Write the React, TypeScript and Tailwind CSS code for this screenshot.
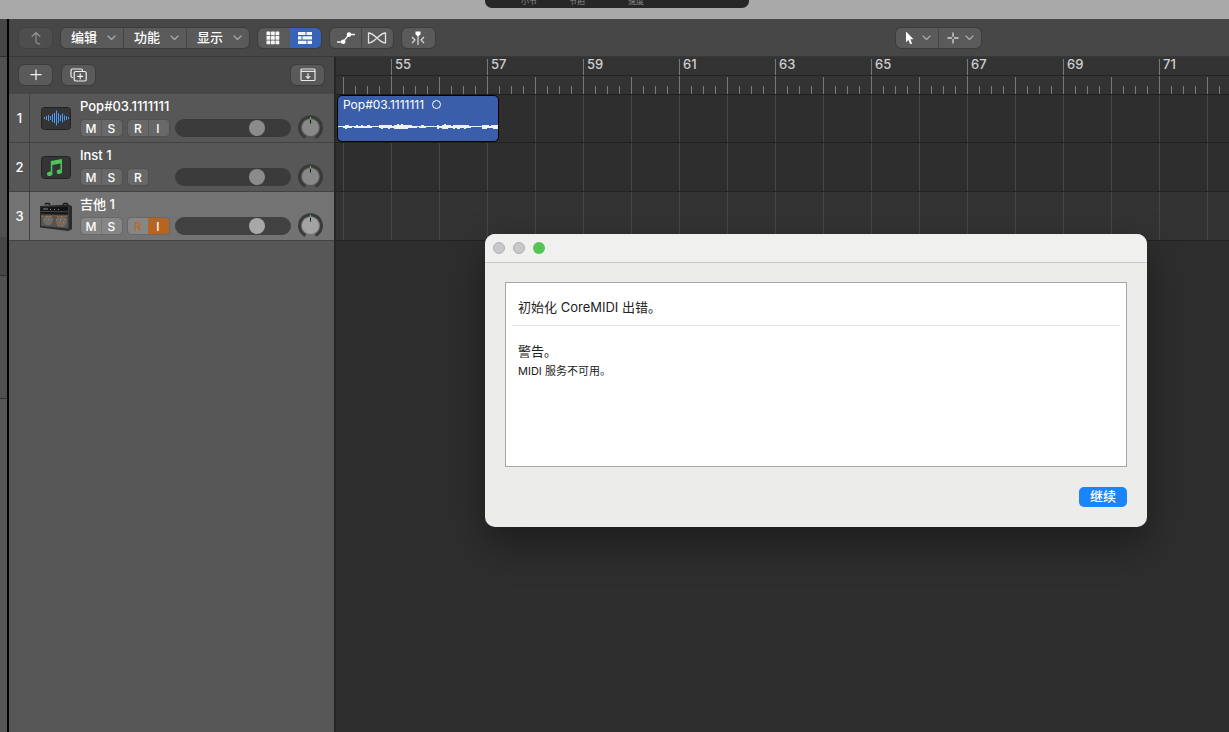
import type { ReactNode } from 'react';

const BARS = Array.from({ length: 19 }, (_, i) => 54 + i);

const WAVE = [0, 0, 2, 4, 3, 2, 1, 2, 3, 2, 3, 2, 2, 3, 2, 1, 1, 1, 3, 4, 3, 3, 4, 3, 2, 4, 5, 4, 5, 4, 4, 3, 3, 2, 2, 1, 2, 3, 2, 1, 1, 1, 1, 1, 4, 2, 4, 5, 4, 3, 2, 4, 3, 4, 3, 3, 4, 3, 2, 1, 1, 1, 1, 1, 4, 4, 3, 2, 3, 4, 4];

const FONT = "font-['Inter','Noto_Sans_CJK_SC',sans-serif]";
const GROUP = 'flex h-5 overflow-hidden rounded-[5px] bg-[#5a5a5a] outline outline-[#3c3c3c]';

const Chevron = () => (
  <svg width="9" height="6" viewBox="0 0 9 6" fill="none" stroke="#a5a5a8" strokeWidth="1.4" strokeLinecap="round" strokeLinejoin="round">
    <path d="M1 1 4.500 4.500 8 1" />
  </svg>
);

interface ToolButtonProps {
  label: string;
  className?: string;
  children: ReactNode;
}

const ToolButton = ({ label, className = 'w-[33px]', children }: ToolButtonProps) => (
  <button aria-label={label} className={`flex h-5 items-center justify-center ${className}`}>
    {children}
  </button>
);

const MenuButton = ({ label }: { label: string }) => (
  <button className="flex h-5 w-[63px] items-center justify-between border-l border-[#454545] pr-[7px] pl-[10px] text-[13px] leading-[18px] font-medium text-white first:w-[62px] first:border-l-0">
    <span className="pb-0.5">{label}</span>
    <Chevron />
  </button>
);

const Toolbar = () => (
  <div className="flex h-[38px] shrink-0 items-start border-b border-[#383838] bg-[#474747] pt-[9px] pl-[10px]">
    <div className="flex h-5 overflow-hidden rounded-[5px] bg-[#4e4e4e] outline outline-[#414141]">
      <ToolButton label="返回">
        <svg width="14" height="14" viewBox="0 0 14 14" fill="none" stroke="#8f8f8f" strokeWidth="1.2" strokeLinecap="round" strokeLinejoin="round">
          <path d="M3 5.500 7 1.500 11 5.500M7 1.700V10Q7 12.800 10.800 12.800" />
        </svg>
      </ToolButton>
    </div>
    <div className={`ml-[9px] ${GROUP}`}>
      <MenuButton label="编辑" />
      <MenuButton label="功能" />
      <MenuButton label="显示" />
    </div>
    <div className={`ml-[9px] ${GROUP}`}>
      <ToolButton label="网格" className="w-8 pr-0.5">
        <svg width="14" height="14" viewBox="0 0 14 14" fill="#f5f5f5">
          {[0.5, 5, 9.5].map((y) => [0.5, 5, 9.5].map((x) => <rect key={`${x}-${y}`} x={x} y={y} width="3.800" height="3.800" rx="0.400" />))}
        </svg>
      </ToolButton>
      <ToolButton label="轨道" className="w-[31px] bg-[#3764b9] pr-px">
        <svg width="16" height="14" viewBox="0 0 16 14" fill="#f5f5f5">
          <path d="M1 1h7.500v3H1zM9.500 1H15v3H9.500zM1 5.200h3.500v3.300H1zM5.500 5.200H15v3.300H5.500zM1 9.700h8.500v3.300H1zM10.500 9.700H15v3.300h-4.500z" />
        </svg>
      </ToolButton>
    </div>
    <div className={`ml-[9px] ${GROUP}`}>
      <ToolButton label="自动化" className="w-[31px]">
        <svg width="20" height="14" viewBox="0 0 20 14" stroke="#f0f0f0" strokeWidth="1.3" fill="none">
          <path d="M1 11h6L13 3.500h6" />
          <circle cx="7.200" cy="10.800" r="2.300" fill="#fff" stroke="none" />
          <circle cx="13" cy="3.600" r="2.300" fill="#fff" stroke="none" />
        </svg>
      </ToolButton>
      <ToolButton label="弹性" className="w-8 border-l border-[#454545] pr-0.5">
        <svg width="20" height="14" viewBox="0 0 20 14" fill="none" stroke="#e4e4e4" strokeWidth="1.300" strokeLinejoin="round">
          <path d="M1.500 2v10C8 12 12 2 18.500 2v10C12 12 8 2 1.500 2Z" />
        </svg>
      </ToolButton>
    </div>
    <div className={`ml-[9px] ${GROUP}`}>
      <ToolButton label="吸附" className="w-[33px] pr-px">
        <svg width="14" height="14" viewBox="0 0 14 14" fill="none" stroke="#dcdcdc" strokeWidth="1.200">
          <path d="M7 3v11M1 6l3 3-3 3M13 6l-3 3 3 3" />
          <path d="M4.500 0.500h5v3L7 5.500 4.500 3.500z" fill="#fff" stroke="none" />
        </svg>
      </ToolButton>
    </div>
    <div className={`mr-[248px] ml-auto ${GROUP}`}>
      <ToolButton label="指针工具" className="w-[42px] gap-2 pl-px">
        <svg width="9" height="14" viewBox="0 0 9 14" fill="#fff">
          <path d="M1 0.500v10.700l2.400-2.200 1.800 4.200 1.900-.8-1.800-4.100h3.200z" />
        </svg>
        <Chevron />
      </ToolButton>
      <ToolButton label="十字工具" className="w-[43px] gap-1.5 border-l border-[#454545]">
        <svg width="12" height="12" viewBox="0 0 12 12" stroke="#d5d5d5" strokeWidth="1.300">
          <path d="M6 0.500v4.500M6 7v4.500M0.500 6H5M7 6h4.500" />
        </svg>
        <Chevron />
      </ToolButton>
    </div>
  </div>
);

const TrackHeaderBar = () => (
  <div className="flex h-[37px] items-start bg-[#474747] pt-2 pr-[10px] pl-[10px]">
    <div className={GROUP}>
      <ToolButton label="新建轨道">
        <svg width="13" height="12" viewBox="0 0 13 12" stroke="#f0f0f0" strokeWidth="1.300" strokeLinecap="round">
          <path d="M7 1v9.500M2 5.700h10" />
        </svg>
      </ToolButton>
    </div>
    <div className={`ml-[10px] ${GROUP}`}>
      <ToolButton label="复制轨道">
        <svg width="17" height="14" viewBox="0 0 17 14" fill="none" stroke="#f0f0f0" strokeWidth="1.200" strokeLinecap="round">
          <path d="M2.500 9.500Q1 9.500 1 8V2.500Q1 1 2.500 1h8.500Q12.500 1 12.500 2.500" />
          <rect x="4.200" y="3.500" width="12" height="9.500" rx="1.500" />
          <path d="M10.200 5.800v5M7.700 8.300h5" />
        </svg>
      </ToolButton>
    </div>
    <div className={`ml-auto ${GROUP}`}>
      <ToolButton label="全局轨道">
        <svg width="16" height="14" viewBox="0 0 16 14" fill="none" stroke="#e6e6e6" strokeWidth="1.200">
          <rect x="1" y="1" width="14" height="11.500" rx="1" />
          <path d="M1 3.300h14" />
          <path d="M8 5.200v5M5.800 8.200 8 10.400 10.200 8.200" />
        </svg>
      </ToolButton>
    </div>
  </div>
);

const WaveIcon = () => (
  <svg width="32" height="24" viewBox="0 0 32 24">
    <rect x="1.500" y="0.500" width="29" height="22" rx="3" fill="#333436" stroke="#232323" />
    <path
      d="M4.500 10v2M6.500 9v4M8.500 8v6M10.500 9v4M12.500 7v8M14.500 6v10M16.500 3.500v15M18.500 6v10M20.500 8v6M22.500 6.500v9M24.500 8.500v5M26.500 9v4M28.500 10v2"
      stroke="#4c9af5"
      strokeWidth="1"
    />
  </svg>
);

const NoteIcon = () => (
  <svg width="32" height="24" viewBox="0 0 32 24">
    <rect x="1.500" y="0.500" width="29" height="22" rx="3" fill="#333436" stroke="#232323" />
    <g fill="#4fc45b">
      <path d="M10.800 5 22 3V15.500H20.500V7.500L12.300 9V18H10.800Z" />
      <ellipse cx="9.700" cy="17.800" rx="2.700" ry="2.200" transform="rotate(-15 9.700 17.800)" />
      <ellipse cx="19.400" cy="15.700" rx="2.700" ry="2.200" transform="rotate(-15 19.400 15.700)" />
    </g>
  </svg>
);

const AmpIcon = () => (
  <svg width="34" height="30" viewBox="0 0 34 30">
    <path d="M6 2.500 7 1.500H10L11 3M24 3 25 1.500H28L29 3" fill="none" stroke="#1b1b1b" strokeWidth="1.500" />
    <path d="M1 4 30 2.500 33 4.500V27L29.500 29 1 25.500Z" fill="#2a2a2b" />
    <path d="M2 5.500 29 4.500V12L2 11.500Z" fill="#151516" />
    <path d="M4 7h5M11 7.500h1M15 7.500h1M19 7.500h1" stroke="#9a9a9a" strokeWidth="0.900" />
    <path d="M2 9.500 29 9.800" stroke="#4b4b4b" />
    <path d="M2 12.500 29 13V26.500L2 24Z" fill="#565452" />
    <circle cx="9" cy="18.500" r="4.800" fill="#6d6b69" />
    <circle cx="22.500" cy="19.500" r="5.500" fill="#6b6967" />
    <g fill="none" stroke="#d0752a" strokeWidth="1.200" strokeDasharray="1.200 2.800">
      <path d="M3 14.300h11M5 17.500h9M18 14.500h9M17 17.500h11M20 20.500h7M19 23.500h7" />
    </g>
    <path d="M29.500 4.500V28.500" stroke="#3b3b3b" />
  </svg>
);

const ICONS: Record<string, ReactNode> = {
  audio: <WaveIcon />,
  inst: <NoteIcon />,
  amp: <AmpIcon />,
};

const Knob = ({ selected }: { selected: boolean }) => (
  <svg width="26" height="26" viewBox="0 0 26 26">
    <path d="M7.500 22.500A11 11 0 1 1 17.500 22.500" fill="none" stroke="#3a3a3a" strokeWidth="3" />
    <circle cx="12.500" cy="12.500" r="8.600" fill={selected ? '#a3a3a3' : '#888888'} />
    <path d="M12 4.500h1v4h-1z" fill="#111" />
    <path d="M12 2h1v2.500h-1z" fill="#3fd04a" />
  </svg>
);

interface Track {
  id: number;
  name: string;
  icon: string;
  input: boolean;
  selected: boolean;
}

const TRACKS: Track[] = [
  { id: 1, name: 'Pop#03.1111111', icon: 'audio', input: true, selected: false },
  { id: 2, name: 'Inst 1', icon: 'inst', input: false, selected: false },
  { id: 3, name: '吉他 1', icon: 'amp', input: true, selected: true },
];

const TrackRow = ({ track }: { track: Track }) => {
  const { selected } = track;
  const chip = selected ? 'bg-[#868686] outline-[#686868]' : 'bg-[#686868] outline-[#505050]';
  const split = selected ? 'border-[#747474]' : 'border-[#5a5a5a]';

  return (
    <div className={`flex h-[49px] border-b border-[#424242] ${selected ? 'bg-[#737373]' : 'bg-[#575757]'}`}>
      <div className="flex w-[21px] items-center justify-center border-r border-[#424242] pt-0.5 pl-px text-[13px] font-medium text-white">
        {track.id}
      </div>
      <div className="flex w-[50px] items-center justify-center pt-0.5 pl-px">{ICONS[track.icon]}</div>
      <div className="flex-1">
        <div className="h-[25px] truncate text-[13px] leading-[25px] font-medium text-white">{track.name}</div>
        <div className="flex h-[18px] items-center">
          <div className={`ml-px flex h-4 overflow-hidden rounded-[3px] text-xs leading-[17px] font-medium text-white outline ${chip}`}>
            <button className="w-5">M</button>
            <button className={`w-[21px] border-l pr-px ${split}`}>S</button>
          </div>
          <div className={`ml-1.5 flex h-4 overflow-hidden rounded-[3px] text-xs leading-[17px] font-medium text-white outline ${chip}`}>
            <button className={selected ? 'w-5 text-[#bd6a2a]' : 'w-5'}>R</button>
            {track.input && (
              <button className={`w-[21px] border-l pr-0.5 ${selected ? 'border-[#b76420] bg-[#b76420]' : split}`}>I</button>
            )}
          </div>
          <input
            type="range"
            aria-label={`${track.name} 音量`}
            defaultValue={74}
            className={`mr-[7px] ml-auto h-[18px] w-[116px] appearance-none rounded-full px-px [&::-webkit-slider-thumb]:size-4 [&::-webkit-slider-thumb]:appearance-none [&::-webkit-slider-thumb]:rounded-full ${
              selected
                ? 'bg-[#414141] [&::-webkit-slider-thumb]:bg-[#a8a8a8]'
                : 'bg-[#3b3b3b] [&::-webkit-slider-thumb]:bg-[#8b8b8b]'
            }`}
          />
          <div className="mr-[10px]">
            <Knob selected={selected} />
          </div>
        </div>
      </div>
    </div>
  );
};

const Ruler = () => (
  <div className="flex h-[38px] overflow-hidden border-b border-[#1e1e1e] bg-[#333333]">
    <div className="mt-[18px] w-[7px] shrink-0 border-t border-[#222222]" />
    {BARS.map((bar) => (
      <div key={bar} className="w-12 shrink-0">
        <div className={`mt-0.5 h-4 ${bar % 2 ? 'border-l border-[#7a7a7a] pl-[3px] text-[13px] leading-[11px] font-medium text-[#d0d0d0]' : ''}`}>
          {bar % 2 ? bar : ''}
        </div>
        <div className="flex h-[19px] items-end border-t border-[#222222]">
          <div className={`w-3 border-l border-[#7a7a7a] ${bar % 2 ? 'h-[18px]' : 'h-[17px]'}`} />
          <div className="h-2 w-3 border-l border-[#7a7a7a]" />
          <div className="h-2 w-3 border-l border-[#7a7a7a]" />
          <div className="h-2 w-3 border-l border-[#7a7a7a]" />
        </div>
      </div>
    ))}
  </div>
);

const Region = () => (
  <div className="ml-px h-[47px] w-[162px] rounded-[5px] border border-black bg-[#3a5ea9] text-white">
    <div className="flex h-[17px] items-center gap-2 pl-[5px] text-xs leading-[17px]">
      Pop#03.1111111
      <span className="size-[9px] rounded-full border border-white" />
    </div>
    <svg className="mt-2.5 block w-full" height="8" viewBox="0 0 142 8" preserveAspectRatio="none" fill="#f0f0f0" shapeRendering="crispEdges">
      <rect x="0" y="3" width="142" height="1" />
      {WAVE.map((h, i) => (
        <rect key={i} x={i * 2} y={4 - Math.ceil(h / 2)} width="2" height={h} />
      ))}
    </svg>
  </div>
);

const Timeline = () => (
  <div className="min-w-0 flex-1 overflow-hidden border-l-2 border-[#262626] bg-[#2e2e2e]">
    <Ruler />
    {TRACKS.map((track) => (
      <div
        key={track.id}
        className={`border-b border-[#222222] bg-[repeating-linear-gradient(to_right,#474747_0px,#474747_1px,transparent_1px,transparent_48px)] bg-[position:7px_0px] ${
          track.id === 1 ? 'h-12' : 'h-[49px]'
        } ${track.selected ? 'bg-[#333333]' : ''}`}
      >
        {track.id === 1 && <Region />}
      </div>
    ))}
  </div>
);

const AlertDialog = () => (
  <div
    role="alertdialog"
    aria-labelledby="alert-title"
    className="absolute top-[234px] left-[485px] w-[662px] overflow-hidden rounded-[10px] bg-[#ececeb] text-[#222222] shadow-[0_16px_40px_0_rgba(0,0,0,0.4)]"
  >
    <div className="flex h-[29px] items-center gap-2 border-b border-[#c8c8c8] bg-[#f0f0ef] pl-2">
      <button aria-label="关闭" className="size-3 rounded-full border border-[#acafb2] bg-[#c6c8ca]" />
      <button aria-label="最小化" className="size-3 rounded-full border border-[#acafb2] bg-[#c6c8ca]" />
      <button aria-label="缩放" className="size-3 rounded-full bg-[#57c255]" />
    </div>
    <div className="px-5 pt-[19px] pb-5">
      <div className="h-[185px] border border-[#a5a5a5] bg-white px-1.5">
        <h1 id="alert-title" className="h-[43px] border-b border-[#e4e4e4] px-1.5 pt-3.5 text-[13px] leading-5">
          初始化 CoreMIDI 出错。
        </h1>
        <p className="px-1.5 pt-[15px] text-[13px] leading-5">警告。</p>
        <p className="px-1.5 text-[11px] leading-5">MIDI 服务不可用。</p>
      </div>
      <div className="flex justify-end pt-5">
        <button className="h-5 w-12 rounded-[5px] bg-[#1a84fb] pb-0.5 text-[13px] leading-[18px] font-medium text-white">继续</button>
      </div>
    </div>
  </div>
);

export default function App() {
  return (
    <div className={`relative flex h-screen flex-col overflow-hidden bg-[#a9a9a9] ${FONT}`}>
      <div className="h-[19px] shrink-0">
        <div className="ml-[485px] flex h-2 w-[264px] items-end overflow-hidden rounded-b-[7px] bg-[#272727] pb-0.5 pl-9 text-[8px] leading-[10px] text-[#8a8a8a]">
          <span className="w-12">小节</span>
          <span className="w-[59px]">节拍</span>
          <span>速度</span>
        </div>
      </div>
      <div className="flex min-h-0 flex-1">
        <div className="flex w-[9px] shrink-0 flex-col border-r-2 border-black bg-[#565656]">
          <div className="h-[38px] border-b border-[#2e2e2e] bg-[#474747]" />
          <div className="h-[180px] bg-[#505050]" />
          <div className="h-[39px] border-b border-[#2e2e2e] bg-[#474747]" />
          <div className="h-[123px] border-b border-[#2e2e2e] bg-[#505050]" />
        </div>
        <div className="flex min-w-0 flex-1 flex-col">
          <Toolbar />
          <div className="flex min-h-0 flex-1">
            <div className="w-[325px] shrink-0 bg-[#575757]">
              <TrackHeaderBar />
              {TRACKS.map((track) => (
                <TrackRow key={track.id} track={track} />
              ))}
            </div>
            <Timeline />
          </div>
        </div>
      </div>
      <AlertDialog />
    </div>
  );
}
